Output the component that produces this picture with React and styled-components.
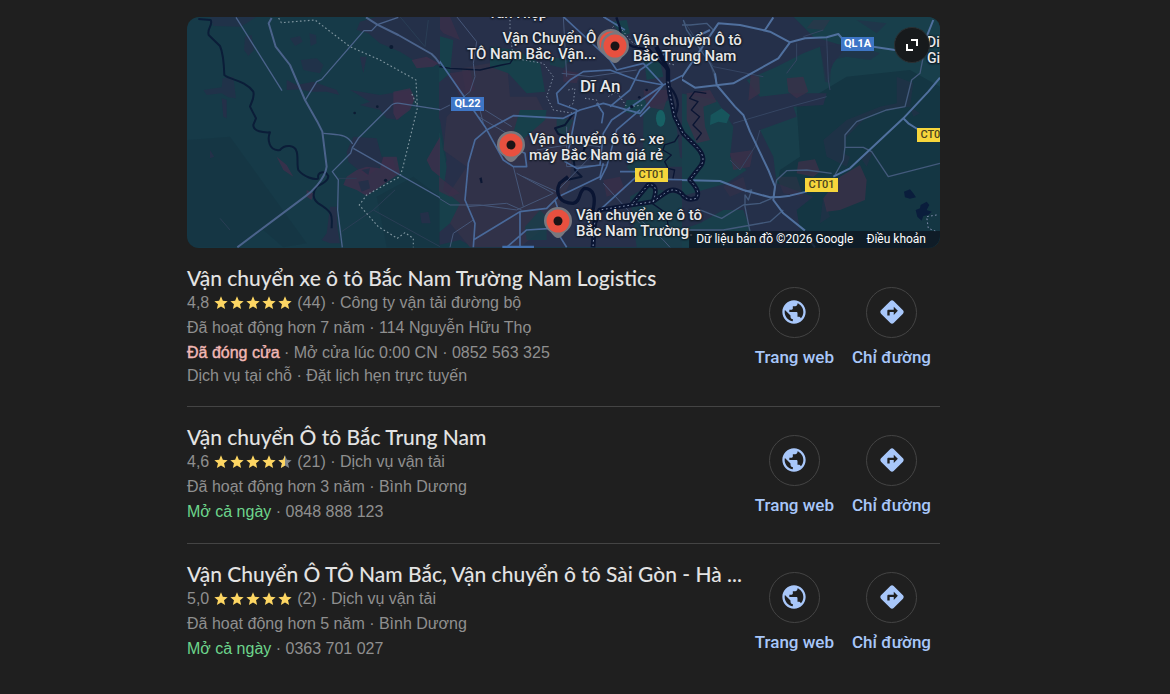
import styled, { createGlobalStyle } from 'styled-components';
import { MdPublic, MdDirections, MdStar } from 'react-icons/md';

const GlobalStyle = createGlobalStyle`
  * {
    box-sizing: border-box;
  }
  body {
    margin: 0;
    background: #1f1f1f;
    color: #8f8f8f;
    font-family: 'Liberation Sans', Arial, sans-serif;
    font-size: 16px;
  }
`;

const Page = styled.main`
  padding: 17px 230px 24px 187px;
`;

const MapBox = styled.section`
  position: relative;
  height: 231px;
  border-radius: 12px;
  overflow: hidden;
  background: #163a48;
`;

const MapArt = styled.svg`
  display: block;
  width: 100%;
  height: 100%;
`;

const Place = styled.div`
  position: absolute;
  left: ${(p) => p.$x}px;
  top: ${(p) => p.$y}px;
  color: #e8e8ea;
  font: 500 ${(p) => p.$size || 15}px/16px Roboto, sans-serif;
  text-align: ${(p) => p.$align || 'left'};
  white-space: pre;
  text-shadow: 0 0 2px #101820, 0 0 2px #101820, 0 1px 2px #101820;
`;

const Shield = styled.span`
  position: absolute;
  left: ${(p) => p.$x}px;
  top: ${(p) => p.$y}px;
  width: 33px;
  height: 14px;
  background: ${(p) => (p.$toll ? '#f6d63c' : '#3e76c6')};
  color: ${(p) => (p.$toll ? '#4a4320' : '#fff')};
  font: ${(p) => (p.$toll ? 500 : 700)} 11px/14px Roboto, sans-serif;
  text-align: center;
`;

const ExpandButton = styled.button`
  position: absolute;
  top: 10px;
  right: 10px;
  display: flex;
  align-items: center;
  justify-content: center;
  width: 36px;
  height: 36px;
  padding: 0;
  border: 1px solid #2c3033;
  border-radius: 50%;
  background: #171a1c;
`;

const Attribution = styled.div`
  position: absolute;
  right: 0;
  bottom: 0;
  display: flex;
  gap: 13px;
  padding: 0 14px 0 7px;
  background: rgba(14, 22, 32, 0.8);
  color: #fff;
  font: 400 12px/17px Roboto, sans-serif;
`;

const TermsLink = styled.a`
  color: inherit;
  text-decoration: none;
`;

const List = styled.ul`
  margin: 0;
  padding: 0;
  list-style: none;
`;

const Listing = styled.li`
  display: flex;
  align-items: center;
  justify-content: space-between;
  padding: 18px 9px 19px 0;

  & + & {
    border-top: 1px solid #444;
  }
`;

const Details = styled.div`
  flex: 1;
  min-width: 0;
`;

const Title = styled.h3`
  margin: 0;
  color: #e3e3e3;
  font: 500 21px/24px Lato, sans-serif;
  white-space: nowrap;
`;

const Line = styled.div`
  display: flex;
  align-items: center;
  line-height: 25px;
  white-space: pre;
`;

const Services = styled(Line)`
  line-height: 22px;
`;

const Stars = styled.span`
  display: flex;
  margin: 0 4px;
`;

const Status = styled.span`
  color: ${(p) => (p.$open ? '#6dd58c' : '#f2b8b5')};
  -webkit-text-stroke: ${(p) => (p.$open ? '0' : '0.4px')};
`;

const Actions = styled.div`
  display: flex;
  gap: 18px;
`;

const Action = styled.a`
  display: flex;
  flex-direction: column;
  align-items: center;
  gap: 9px;
  color: #a8c7fa;
  font: 500 17px/20px Roboto, sans-serif;
  text-decoration: none;
  white-space: nowrap;
`;

const Circle = styled.span`
  display: flex;
  align-items: center;
  justify-content: center;
  width: 51px;
  height: 51px;
  border: 1px solid #444;
  border-radius: 50%;
`;

const listings = [
  {
    name: 'Vận chuyển xe ô tô Bắc Nam Trường Nam Logistics',
    rating: '4,8',
    fill: [1, 1, 1, 1, 1],
    reviews: 44,
    type: 'Công ty vận tải đường bộ',
    history: 'Đã hoạt động hơn 7 năm · 114 Nguyễn Hữu Thọ',
    open: false,
    status: 'Đã đóng cửa',
    contact: 'Mở cửa lúc 0:00 CN · 0852 563 325',
    services: 'Dịch vụ tại chỗ · Đặt lịch hẹn trực tuyến',
  },
  {
    name: 'Vận chuyển Ô tô Bắc Trung Nam',
    rating: '4,6',
    fill: [1, 1, 1, 1, 0.5],
    reviews: 21,
    type: 'Dịch vụ vận tải',
    history: 'Đã hoạt động hơn 3 năm · Bình Dương',
    open: true,
    status: 'Mở cả ngày',
    contact: '0848 888 123',
  },
  {
    name: 'Vận Chuyển Ô TÔ Nam Bắc, Vận chuyển ô tô Sài Gòn - Hà ...',
    rating: '5,0',
    fill: [1, 1, 1, 1, 1],
    reviews: 2,
    type: 'Dịch vụ vận tải',
    history: 'Đã hoạt động hơn 5 năm · Bình Dương',
    open: true,
    status: 'Mở cả ngày',
    contact: '0363 701 027',
  },
];

function Star({ fill }) {
  if (fill === 1) return <MdStar size={16} color="#fdd663" />;
  return (
    <svg width="16" height="16" viewBox="0 0 24 24">
      <path fill="#80868b" d="M12 17.27 18.18 21l-1.64-7.03L22 9.24l-7.19-.61L12 2 9.19 8.63 2 9.24l5.46 4.73L5.82 21z" />
      <path fill="#fdd663" d="M12 17.27V2L9.19 8.63 2 9.24l5.46 4.73L5.82 21z" />
    </svg>
  );
}

function Pin({ x, y }) {
  return (
    <g transform={`translate(${x} ${y})`}>
      <path fill="#77787f" d="M0-14a14 14 0 0 1 14 14c0 6-4 9-7 11.500Q3 17 0 17T-7 11.500C-10 9-14 6-14 0A14 14 0 0 1 0-14z" />
      <circle r="11.500" fill="#e8503f" />
      <circle r="4.500" fill="#1c1416" />
    </g>
  );
}

// The map is drawn as three tiles, west to east, at three units per pixel.
function WestTile() {
  return (
    <g transform="translate(-7 -7) scale(0.3333)">
      <path fill="#143341" d="M22 390 150 380 380 700 310 712 250 660 170 712H22zM590 560 700 500 780 560V712H620z" opacity=".45" />
      <g fill="#243049">
        <path d="M590 20H780V170L735 145 700 150 660 125 600 100 565 70 530 60 540 35z" />
        <path opacity=".75" d="M90 20H230L200 40 180 50 100 48zM330 85 360 78 368 95 345 108zM388 70 408 75 410 100 392 108zM362 150 410 145 430 165 420 190 395 185 370 180zM195 80 215 75 222 120 205 138 192 120zM128 205 160 200 168 265 145 262 125 250 80 255 70 240 125 232z" />
        <path d="M320 210 350 225 400 215 470 240 478 255 440 245 390 245 360 238 320 240zM510 240 600 255 690 240 700 275 655 330 620 325 600 300 540 285 570 275zM520 380 590 385 605 440 640 450 650 490 600 470 560 500 505 455 500 425zM540 140 560 140 550 190zM720 610 745 605 752 640 725 640zM450 590 470 590 472 650 480 700 450 700 425 690 440 670zM125 265 140 270 140 325 130 320zM90 420 103 440 90 445z" />
      </g>
      <g fill="#412f4c" opacity=".75">
        <path d="M695 150 740 140 775 160 760 170 710 175zM640 245 690 235 705 265 690 300 650 330 640 310zM610 440 650 440 660 490 600 530 560 558 530 540 490 525 500 500 530 480 560 470 600 475zM780 380V500L755 480 740 450zM290 440 320 465 340 500 310 480zM380 540 400 550 395 570 380 560z" />
      </g>
      <g fill="#243049"><path d="M535 515 565 510 570 535 545 545zM545 480 570 475 565 495z" /></g>
      <g fill="none" stroke="#2a3e55" strokeWidth="3">
        <path d="M660 20 735 110 745 30M485 665 580 600 645 540M580 600 780 710M120 625 150 660M475 505H530" />
      </g>
      <g fill="none" stroke="#0b1d38" strokeWidth="6" strokeLinejoin="round">
        <path d="M55 27 92 30C100 45 80 55 86 75L120 108C130 130 132 165 133 195 150 210 195 210 220 245 225 265 212 280 210 290L228 325 220 345C220 365 250 368 270 367 262 385 265 425 300 420 315 402 345 405 350 425 355 440 350 465 355 480 370 500 405 512 415 505 410 485 435 480 445 498 445 512 430 520 410 530 395 550 400 570 415 580 465 610 455 620 455 655 455 690 440 712" />
      </g>
      <g fill="none" stroke="#7f959f" strokeWidth="3.500" strokeDasharray="5 7">
        <path d="M296 24 304 38 405 30 510 110 600 150 708 210 712 290 695 250M712 295 668 475 660 500 560 555 538 585 595 650 652 685 675 668 700 685V712" />
      </g>
      <g fill="none" stroke="#4b638b" strokeWidth="4" strokeLinejoin="round">
        <path d="M168 22 306 242M375 272 410 215 425 208 552 62H575L592 44 655 22M430 370C475 375 500 370 518 402M518 412 535 385 630 290Q640 277 660 280L780 299M520 415 780 563M518 410 512 430 457 485 475 510 473 600 487 712" />
      </g>
      <g fill="none" stroke="#4b638b" strokeWidth="6" strokeLinejoin="round">
        <path d="M275 24 266 40 287 110 330 165 375 270 412 335 427 365 440 470C435 510 390 550 375 560L172 712M558 22 592 44 655 75 755 132Q770 145 780 162" />
      </g>
      <g fill="#0c1b33"><circle cx="634" cy="111" r="6" /><circle cx="617" cy="511" r="5" /><circle cx="524" cy="309" r="4" /><circle cx="592" cy="290" r="4" /></g>
    </g>
  );
}

function CityTile() {
  return (
    <g transform="translate(243 -7) scale(0.3333)">
      <path fill="#27304a" d="M0 20H780V712H130L90 690 0 712V650L40 600 20 520 50 450 30 330 0 300 10 210 0 180z" />
      <path fill="#313249" d="M95 175 230 150 240 260 320 260 350 320 430 320 420 520 360 640 270 712H120L60 640 50 560 110 470 40 420 50 320 110 260z" />
      <g fill="#17404b">
        <path d="M0 70 70 90 60 190 0 240zM0 360 30 370 50 470 40 540 90 580 60 640 0 690zM180 110 260 120 330 160 345 245 290 250 235 190 180 170zM245 385 270 300 350 300 345 330 265 400zM545 35 590 30 600 70 575 80zM640 130 690 150 700 200 650 210zM590 270 660 270 630 315 580 305z" />
        <path d="M380 320 430 330 410 375 380 370zM640 300 720 270 740 350 750 440 780 470H715L640 470 620 510 590 470 640 420zM600 560 650 530 780 560V712H620zM330 600 350 620 350 690 290 690 285 650zM360 140 420 150 400 175 360 165z" opacity=".75" />
      </g>
      <g fill="#3b2f4a" opacity=".75">
        <path d="M0 20H60L90 90 40 70zM60 190 120 180 135 240 90 260zM520 510 570 500 585 540 530 560zM400 180 450 190 440 220 400 215zM0 480 40 510 90 550 60 560 0 530zM640 240 720 240 700 300 650 290z" />
      </g>
      <ellipse cx="692" cy="325" rx="14" ry="25" fill="#176064" />
      <g fill="none" stroke="#0a1734" strokeLinejoin="round">
        <path strokeWidth="4" d="M0 165 60 175 150 180 215 165 240 160 250 145" />
        <path strokeWidth="6" d="M430 310 405 345 375 355 385 372 425 385 470 395 460 425 430 440 435 480 455 500 410 510" />
      </g>
      <g fill="none" stroke="#8592a7" strokeWidth="3" strokeDasharray="4 7">
        <path d="M240 30V65L250 145 340 160 370 200 350 260 370 300 430 310M540 60 560 40 605 95 690 155 735 165M415 240 435 235 430 280 415 290M465 265 500 270 515 305M535 260 560 245 590 290M600 290 640 285" />
      </g>
      <g fill="none" stroke="#465779" strokeWidth="3" strokeLinejoin="round">
        <path d="M80 20 140 95 130 160 135 200 120 245 95 265M0 295 30 300 60 285M165 300 245 350M250 470 280 590M260 490 370 550 260 600 150 585 60 585 0 548M110 590 230 580 275 600M145 320 230 370M150 300 160 340M410 350 410 470 530 465M320 420 440 400 510 410M395 190 480 200 620 180M280 500 380 545 520 400M60 712 70 670 130 630M620 620 700 690 720 712M520 520 630 640M400 20 410 200" />
      </g>
      <g fill="none" stroke="#49699a" strokeWidth="5" strokeLinejoin="round">
        <path d="M0 125 30 155 165 350 220 450 250 470H290L285 430 240 410M130 712 135 640 105 570 115 460 135 390 170 360 250 317 400 325 450 300 520 280 630 310 700 225 780 185M420 210 380 250 385 280 440 300 420 400 405 455 440 475 510 465 520 370 545 330 700 225M420 210 460 185 540 180 620 210 700 225 640 160 560 180 540 150 400 20M630 320 660 290M130 690 270 605 350 595 385 560 510 500 520 460M510 510 530 470 560 360 630 300M510 600 630 490M230 712 290 660 365 655M270 605V712M375 570 385 600M500 280 520 310 515 340M540 290 600 240 630 180 720 120M390 680 410 712M570 485H650M710 508 780 510M520 20 585 60" />
      </g>
      <path fill="#416fad" d="M217 707h95v8h-95z" />
      <g fill="#0c1733"><circle cx="605" cy="290" r="5" /><circle cx="628" cy="262" r="4" /><circle cx="650" cy="240" r="4" /><path d="M148 505 155 502 158 518 152 520z" /></g>
    </g>
  );
}

function EastTile() {
  return (
    <g transform="translate(493 -7) scale(0.3333)">
      <path fill="#183f4b" d="M0 20H790V712H0z" />
      <path fill="#143643" d="M350 290 500 200 690 180 780 230V712H380L280 600 300 480 360 440z" />
      <path fill="#25304a" d="M0 20H340L400 80 500 110 460 160 440 210 420 110 370 130 290 170 200 210 240 260 330 250 440 250 430 285 340 290 350 320 240 360 280 440 290 520 400 560 350 600 360 660 310 712H230L190 600 130 600 60 640 0 660V560L140 520 200 480 150 440 160 350 110 270 0 250z" />
      <g fill="#25304a">
        <path d="M420 110 510 100 600 130 570 150 500 140 455 150 450 220 435 215zM650 200 700 220 690 290 610 300 560 320 500 380 490 430 510 440 500 470 440 440 430 390 500 330 600 290 650 280zM540 440 580 420 560 470zM530 30 620 40 590 70zM690 290 720 310 700 320zM430 560 450 620 420 640z" opacity=".6" />
      </g>
      <g fill="#3b3149">
        <path d="M20 250 90 240 110 275 70 290 75 350 90 390 50 400 20 330zM212 195 238 200 240 250 205 272zM320 205 370 200 385 245 350 265 325 245zM355 455 405 448 420 485 400 500 350 490zM430 565 480 500 540 465 560 510 555 570 480 600 440 605zM150 430 220 420 210 470 160 480z" opacity=".8" />
        <path d="M290 500 350 500 370 560 310 550zM130 530 190 500 200 540 150 560zM400 30 450 30 430 60 380 55z" opacity=".4" />
      </g>
      <path fill="#17555c" d="M92 315 125 295 150 315 140 340 115 335 90 345z" />
      <path fill="#0a1d3c" d="M672 545 690 538 700 550 708 562 690 566 675 562zM707 600 720 595 722 585 740 575 748 585 740 600 755 605 745 615 730 618 725 632 712 620z" />
      <path fill="none" stroke="#7f8cab" strokeWidth="3" strokeDasharray="5 7" d="M770 615 740 620 745 655 770 665" />
      <g fill="none" stroke="#354562" strokeWidth="3">
        <path d="M90 160 110 220M100 170 250 200M160 340 330 290 440 260M440 80 445 210 450 240M240 360 225 410 180 480 150 450M430 60 370 80M320 190 350 150 350 100M10 30 100 170" />
      </g>
      <g fill="none" stroke="#435a7c" strokeWidth="4" strokeLinejoin="round">
        <path d="M10 30 20 60 90 160 105 190 110 220M730 140 720 190 695 210 675 290 620 300 530 335 495 375V410L490 450 465 495M495 412H550L575 425 625 500 780 460M455 490 380 480 320 482 290 510 280 560M0 45H30L80 40 100 60M195 545 215 540 205 570 195 555 195 590 210 665M60 600 125 625 190 585 240 580 275 565M0 660 130 660 270 635 310 600" />
      </g>
      <g fill="none" stroke="#50709e" strokeWidth="6" strokeLinejoin="round">
        <path d="M0 210 115 40 180 45 270 65 330 97 295 145 160 220 45 233 0 205M105 190 110 225 165 290 190 315 210 365 265 480 285 530 280 570 310 610 375 662M330 97 375 85 440 82 475 72 490 90M255 60 280 22M580 110 645 120M740 80 760 30M0 510 120 513 190 540 270 562Q300 562 330 557L380 545M460 500 510 475 670 325 745 245 780 203M670 325 685 340 712 357M20 95 90 60M380 680 405 712" />
      </g>
    </g>
  );
}

// The river crosses the seam between the city and east tiles.
function River() {
  const course = 'M345 215 350 250 365 320 390 370 430 410Q460 440 445 465L410 510Q445 545 430 565 400 575 385 550 360 530 335 550L300 575 235 585 140 600 125 640 120 712M300 575Q320 520 285 525L235 585';
  return (
    <g transform="translate(366 -7) scale(0.3333)" fill="none" strokeLinejoin="round">
      <g stroke="#0a1533">
        <path strokeWidth="7" d="M190 22 200 50 205 90 240 110 290 120 315 150 345 180M350 230C385 270 375 300 365 320" />
        <path strokeWidth="10" d="M45 500 20 520C5 550 20 580 60 580 85 575 75 545 95 535 120 535 130 560 120 600L125 640" />
        <path strokeWidth="14" d={course} />
        <path strokeWidth="13" d="M310 110 330 150 345 180V215" />
        <path strokeWidth="4" d="M378 375 365 395 335 405 330 420 355 435 335 455 345 475 365 480 360 505M460 250 425 245 410 265 435 275 415 300 440 320 420 345 445 370 430 390M290 575 340 610 350 680" />
      </g>
      <path stroke="#8794b0" strokeWidth="3" strokeDasharray="5 8" d={course} />
    </g>
  );
}

function Map() {
  return (
    <MapBox aria-label="Bản đồ">
      <MapArt viewBox="0 0 753 231" preserveAspectRatio="xMinYMid slice" aria-hidden="true">
        <defs>
          <clipPath id="west"><path d="M0 0H253V231H0z" /></clipPath>
          <clipPath id="city"><path d="M252 0H495V231H252z" /></clipPath>
        </defs>
        <EastTile />
        <g clipPath="url(#city)"><CityTile /></g>
        <g clipPath="url(#west)"><WestTile /></g>
        <River />
        <Pin x={424} y={26} />
        <Pin x={428} y={29} />
        <Pin x={324} y={128} />
        <Pin x={371} y={204} />
      </MapArt>
      <Place $x={301} $y={-12}>Tân Hiệp</Place>
      <Place $x={280} $y={13} $align="right">{'Vận Chuyển Ô\nTÔ Nam Bắc, Vận...'}</Place>
      <Place $x={446} $y={15}>{'Vận chuyển Ô tô\nBắc Trung Nam'}</Place>
      <Place $x={393} $y={61} $size={17}>Dĩ An</Place>
      <Place $x={342} $y={114}>{'Vận chuyển ô tô - xe\nmáy Bắc Nam giá rẻ'}</Place>
      <Place $x={389} $y={190}>{'Vận chuyển xe ô tô\nBắc Nam Trường.'}</Place>
      <Place $x={740} $y={17} $size={14}>{'Di\nGi'}</Place>
      <Shield $x={264} $y={80}>QL22</Shield>
      <Shield $x={654} $y={20}>QL1A</Shield>
      <Shield $x={448} $y={151} $toll>CT01</Shield>
      <Shield $x={618} $y={161} $toll>CT01</Shield>
      <Shield $x={730} $y={111} $toll>CT01</Shield>
      <ExpandButton aria-label="Mở rộng bản đồ">
        <svg width="14" height="14" viewBox="0 0 14 14" fill="none" stroke="#fff" strokeWidth="2">
          <path d="M6 2H12V8M2 6V12H8" />
        </svg>
      </ExpandButton>
      <Attribution>
        <span>Dữ liệu bản đồ ©2026 Google</span>
        <TermsLink href="#terms">Điều khoản</TermsLink>
      </Attribution>
    </MapBox>
  );
}

export default function App() {
  return (
    <>
      <GlobalStyle />
      <Page>
        <Map />
        <List>
          {listings.map((item) => (
            <Listing key={item.name}>
              <Details>
                <Title>{item.name}</Title>
                <Line>
                  {item.rating}
                  <Stars>
                    {item.fill.map((fill, i) => (
                      <Star key={i} fill={fill} />
                    ))}
                  </Stars>
                  ({item.reviews}) · {item.type}
                </Line>
                <Line>{item.history}</Line>
                <Line>
                  <Status $open={item.open}>{item.status}</Status> · {item.contact}
                </Line>
                {item.services && <Services>{item.services}</Services>}
              </Details>
              <Actions>
                <Action href="#website">
                  <Circle><MdPublic size={28} /></Circle>
                  Trang web
                </Action>
                <Action href="#directions">
                  <Circle><MdDirections size={28} /></Circle>
                  Chỉ đường
                </Action>
              </Actions>
            </Listing>
          ))}
        </List>
      </Page>
    </>
  );
}
